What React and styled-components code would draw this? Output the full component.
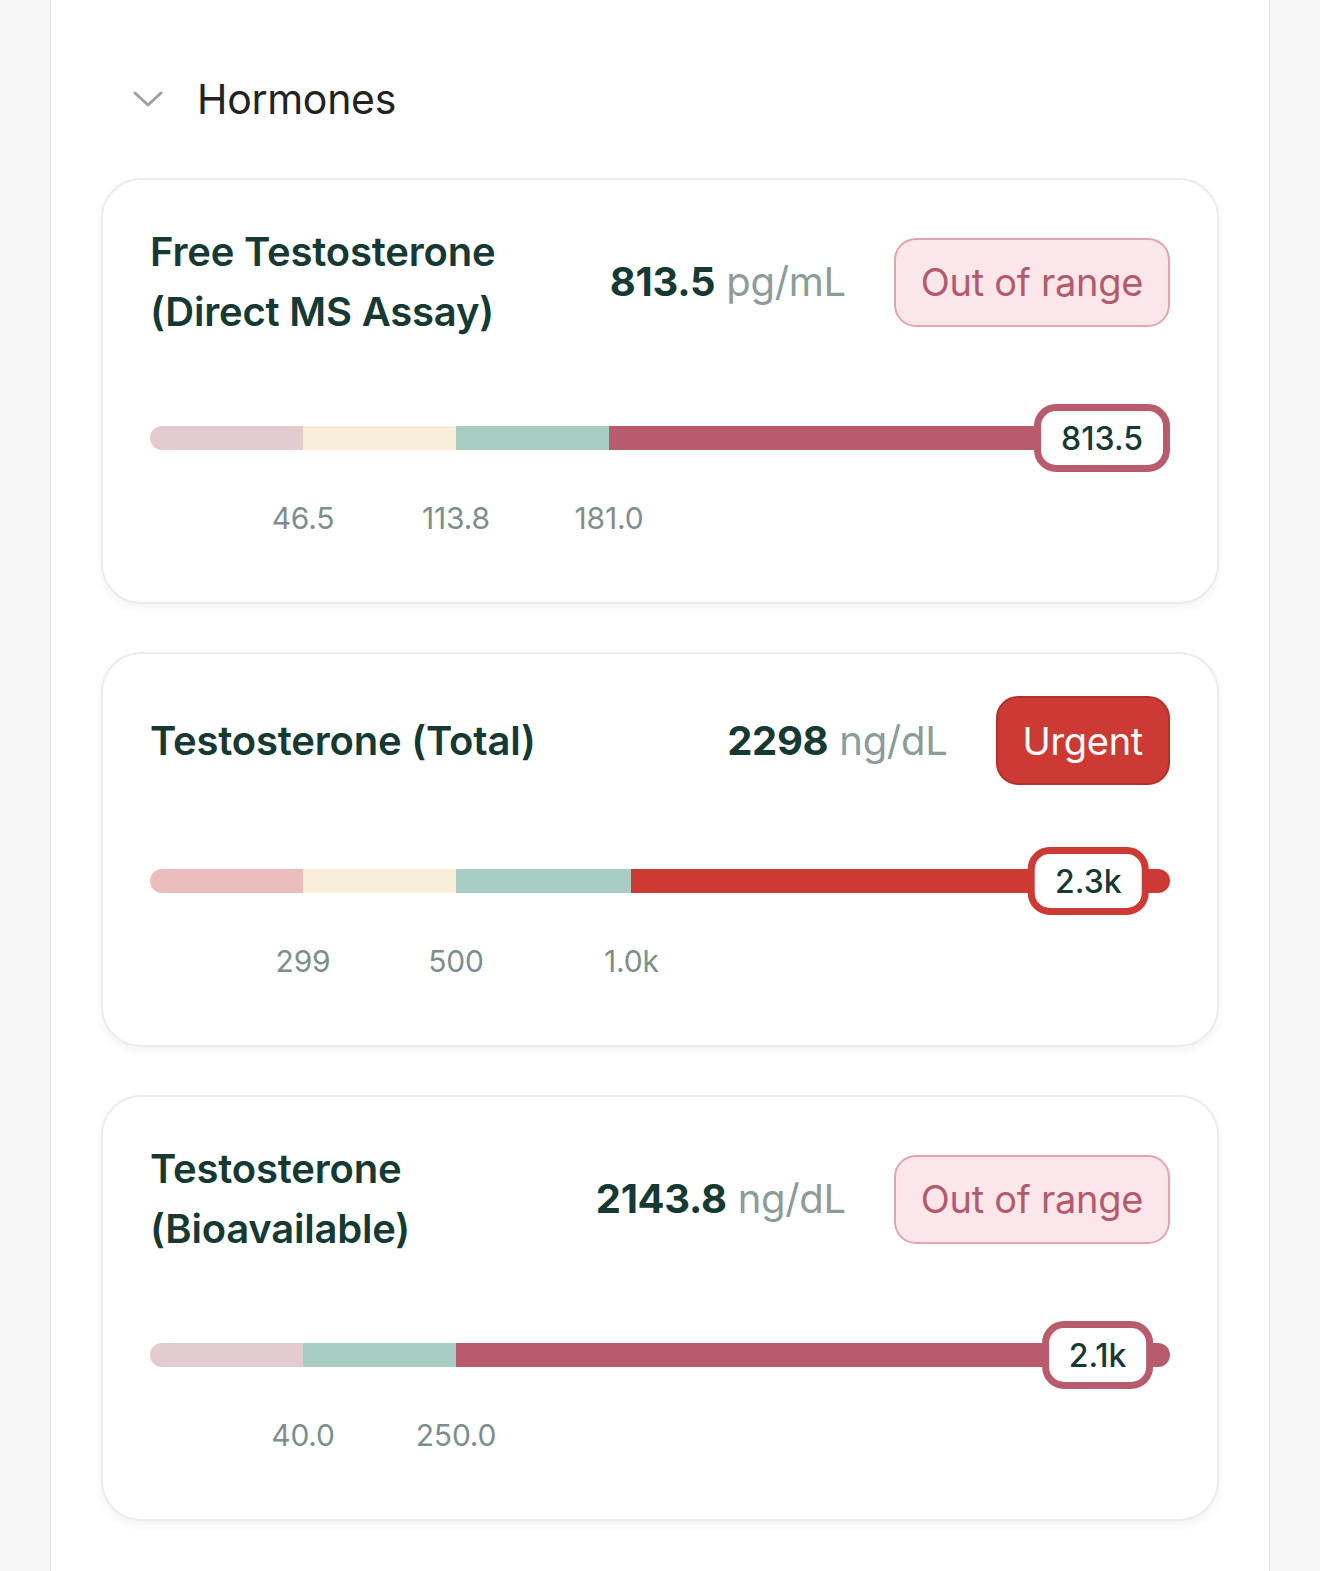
import React from "react"
import styled, { createGlobalStyle } from "styled-components"

const GlobalStyle = createGlobalStyle`
    html, body {
        margin: 0;
        padding: 0;
        background: #f6f6f6;
        font-family: "Inter", "Noto Sans", sans-serif;
    }
`

const Panel = styled.div`
    width: 1220px;
    margin-left: 50px;
    box-sizing: border-box;
    background: #ffffff;
    border: 1px solid #e6e6e6;
    border-top: none;
    padding: 75px 50px 51px;
`

const SectionHeader = styled.div`
    display: flex;
    align-items: center;
    gap: 34px;
    padding-left: 32px;
    height: 48px;
    margin-bottom: 55px;
`

const SectionTitle = styled.h2`
    margin: 0;
    font-size: 41px;
    font-weight: 400;
    line-height: 48px;
    color: #222222;
    letter-spacing: -0.3px;
`

const CardList = styled.div`
    display: flex;
    flex-direction: column;
    gap: 48px;
`

const Card = styled.div`
    background: #ffffff;
    border: 2px solid #ececec;
    border-radius: 40px;
    box-shadow: 0 4px 8px rgba(0, 0, 0, 0.05);
    padding: 42px 47px 66px 47px;
`

const CardHeader = styled.div`
    display: flex;
    align-items: center;
    gap: 48px;
`

const Title = styled.h3`
    flex: 1;
    min-width: 0;
    margin: 0;
    font-size: 40px;
    font-weight: 600;
    line-height: 60px;
    color: #163a33;
    letter-spacing: -0.2px;
`

const Value = styled.div`
    font-size: 40px;
    line-height: 60px;
    white-space: nowrap;
    letter-spacing: -0.3px;
    b {
        font-weight: 700;
        color: #163a33;
    }
    span {
        font-weight: 400;
        color: #8c9c9a;
    }
`

const Badge = styled.div`
    height: 89px;
    box-sizing: border-box;
    display: flex;
    align-items: center;
    padding: 0 25px;
    border-radius: 22px;
    font-size: 38px;
    font-weight: 400;
    letter-spacing: -0.3px;
    white-space: nowrap;
    border: 2px solid ${(props) => (props.$urgent ? "#b3302b" : "#e0a5b1")};
    background: ${(props) => (props.$urgent ? "#cc3a33" : "#fbe6ea")};
    color: ${(props) => (props.$urgent ? "#ffffff" : "#b35a6c")};
`

const Track = styled.div`
    position: relative;
    height: 68px;
    margin-top: 62px;
    display: flex;
    align-items: center;
`

const Bar = styled.div`
    flex: 1;
    height: 24px;
    display: flex;
    border-radius: 12px;
    overflow: hidden;
`

const Segment = styled.div`
    flex: 0 0 ${(props) => props.$width}%;
    background: ${(props) => props.$color};
`

const Marker = styled.div`
    position: absolute;
    top: 0;
    height: 68px;
    box-sizing: border-box;
    display: flex;
    align-items: center;
    padding: 0 20px;
    background: #ffffff;
    border: 7px solid ${(props) => props.$color};
    border-radius: 22px;
    font-size: 32px;
    font-weight: 500;
    color: #163a33;
    ${(props) =>
        props.$end
            ? "right: 0;"
            : `left: ${props.$at}%; transform: translateX(-50%);`}
`

const Ticks = styled.div`
    position: relative;
    height: 36px;
    margin-top: 28px;
`

const Tick = styled.span`
    position: absolute;
    top: 0;
    transform: translateX(-50%);
    font-size: 30px;
    line-height: 36px;
    color: #7d8e8c;
    letter-spacing: -0.2px;
`

const Chevron = () => (
    <svg width="30" height="18" viewBox="0 0 30 18" fill="none">
        <polyline
            points="2,3 15,15 28,3"
            stroke="#9ca1ab"
            strokeWidth="3"
            strokeLinecap="round"
            strokeLinejoin="round"
        />
    </svg>
)

const LOW = "#e3cbd0"
const CREAM = "#f9efd9"
const TEAL = "#a7cdc4"
const RED = "#b85c6d"
const URGENT = "#cc3a33"

const markers = [
    {
        name: "Free Testosterone (Direct MS Assay)",
        value: "813.5",
        unit: "pg/mL",
        urgent: false,
        color: RED,
        segments: [
            [15, LOW],
            [15, CREAM],
            [15, TEAL],
            [55, RED],
        ],
        ticks: [
            [15, "46.5"],
            [30, "113.8"],
            [45, "181.0"],
        ],
        label: "813.5",
        end: true,
    },
    {
        name: "Testosterone (Total)",
        value: "2298",
        unit: "ng/dL",
        urgent: true,
        color: URGENT,
        segments: [
            [15, "#edbdbd"],
            [15, CREAM],
            [17.2, TEAL],
            [52.8, URGENT],
        ],
        ticks: [
            [15, "299"],
            [30, "500"],
            [47.2, "1.0k"],
        ],
        label: "2.3k",
        at: 92,
    },
    {
        name: "Testosterone (Bioavailable)",
        value: "2143.8",
        unit: "ng/dL",
        urgent: false,
        color: RED,
        segments: [
            [15, LOW],
            [15, TEAL],
            [70, RED],
        ],
        ticks: [
            [15, "40.0"],
            [30, "250.0"],
        ],
        label: "2.1k",
        at: 92.9,
    },
]

const MarkerCard = ({ item }) => (
    <Card>
        <CardHeader>
            <Title>{item.name}</Title>
            <Value>
                <b>{item.value}</b> <span>{item.unit}</span>
            </Value>
            <Badge $urgent={item.urgent}>
                {item.urgent ? "Urgent" : "Out of range"}
            </Badge>
        </CardHeader>
        <Track>
            <Bar>
                {item.segments.map(([w, c], i) => (
                    <Segment key={i} $width={w} $color={c} />
                ))}
            </Bar>
            <Marker $color={item.color} $end={item.end} $at={item.at}>
                {item.label}
            </Marker>
        </Track>
        <Ticks>
            {item.ticks.map(([at, label]) => (
                <Tick key={label} style={{ left: `${at}%` }}>
                    {label}
                </Tick>
            ))}
        </Ticks>
    </Card>
)

export default function App() {
    return (
        <>
            <GlobalStyle />
            <Panel>
                <SectionHeader>
                    <Chevron />
                    <SectionTitle>Hormones</SectionTitle>
                </SectionHeader>
                <CardList>
                    {markers.map((item) => (
                        <MarkerCard key={item.name} item={item} />
                    ))}
                </CardList>
            </Panel>
        </>
    )
}
